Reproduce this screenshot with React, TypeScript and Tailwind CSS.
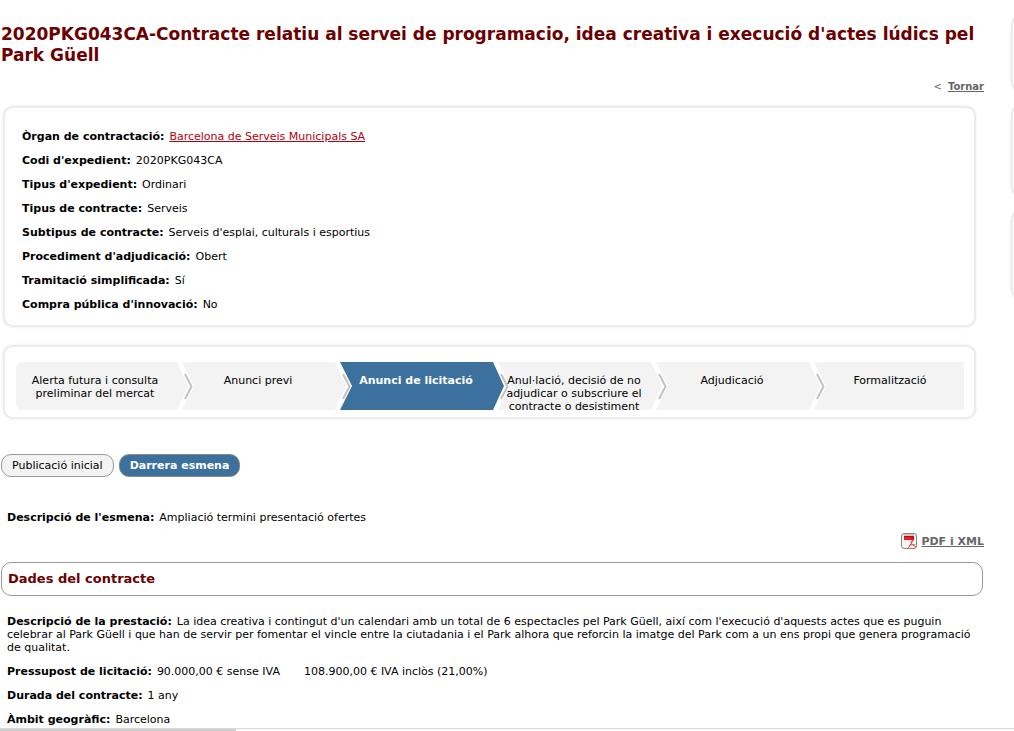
import clsx from 'clsx'
import type { ReactNode } from 'react'

type Step = { label: string; active?: boolean }

const STEPS: Step[] = [
  { label: 'Alerta futura i consulta preliminar del mercat' },
  { label: 'Anunci previ' },
  { label: 'Anunci de licitació', active: true },
  { label: 'Anul·lació, decisió de no adjudicar o subscriure el contracte o desistiment' },
  { label: 'Adjudicació' },
  { label: 'Formalització' },
]

const GREY = '#f3f3f3'
const BLUE = '#3c719d'

function Field({ label, children }: { label: string; children: ReactNode }) {
  return (
    <div>
      <dt className="mr-[5px] inline font-bold">{label}:</dt>
      <dd className="inline">{children}</dd>
    </div>
  )
}

// Arrow drawn over the joint between two steps
function StepArrow({ from, to }: { from: string; to: string }) {
  return (
    <svg className="absolute top-0 left-full z-[1] h-12 w-6" viewBox="0 0 24 48" aria-hidden="true">
      <rect width="24" height="48" fill={to} />
      <path d="M0 0H8L20 24L8 48H0Z" fill="#fff" />
      <path d="M0 0H3L14 24L3 48H0Z" fill={from} />
      <path d="M11 12L17.5 24.500L11 37" fill="none" stroke="#c2c2c2" strokeWidth="2" />
    </svg>
  )
}

function Steps() {
  return (
    <ol className="flex h-12 rounded-l-md bg-[#f3f3f3]">
      {STEPS.map((step, i) => {
        const next = STEPS[i + 1]
        return (
          <li
            key={step.label}
            className={clsx('relative min-w-0 flex-1', step.active && 'bg-[#3c719d]')}
          >
            {next && (
              <StepArrow from={step.active ? BLUE : GREY} to={next.active ? BLUE : GREY} />
            )}
            <a
              href="#fase"
              className={clsx(
                'relative z-10 block pt-3 text-center',
                i === 0 ? 'px-2' : 'pr-1 pl-[14px]',
                step.active && 'font-bold text-white',
              )}
            >
              {step.label}
            </a>
          </li>
        )
      })}
    </ol>
  )
}

function PdfIcon() {
  return (
    <svg className="size-4" viewBox="0 0 16 16" aria-hidden="true">
      <rect x="0.5" y="0.5" width="15" height="15" rx="2.5" fill="#f4f4f4" stroke="#858585" />
      <path d="M3 1H13V3H3Z" fill="#c9c9c9" />
      <path d="M3 3H13V7H3Z" fill="#ee1c1c" />
      <path d="M3 3H13V4H3Z" fill="#b80808" />
      <path d="M10 3H13V7L11 9Z" fill="#c41010" />
      <path
        d="M12 6C11 9 10 12 7 15M10 8C10 11 12 12.5 15 14M8 12.5C10 11.5 12 11 14 12"
        fill="none"
        stroke="#ea4848"
        strokeWidth="1"
      />
    </svg>
  )
}

const CARD = 'rounded-[10px] border-2 border-[#ececec] bg-white shadow-[0_0_3px_#e8e8e8]'

export default function App() {
  return (
    <div className="flex min-h-screen flex-col overflow-hidden bg-white font-['DejaVu_Sans',Verdana,sans-serif] text-[11px] leading-[13px] text-black">
      <div className="flex flex-1">
        <main className="min-w-0 flex-1 pt-6 pr-[26px] pl-[1px]">
          <h1 className="text-[17px] leading-[21px] font-bold text-[#6c0000]">
            2020PKG043CA-Contracte relatiu al servei de programacio, idea creativa i execució d'actes
            lúdics pel Park Güell
          </h1>

          <div className="mt-[14px] flex justify-end gap-[6px] text-[10px] text-[#666]">
            <span>&lt;</span>
            <a href="#tornar" className="font-bold underline">
              Tornar
            </a>
          </div>

          <section className={clsx(CARD, 'mt-[13px] mr-2 ml-[2px] px-[17px] pt-[22px] pb-[14px]')}>
            <dl className="flex flex-col gap-[11px]">
              <Field label="Òrgan de contractació">
                <a href="#organ" className="text-[#b1000e] underline">
                  Barcelona de Serveis Municipals SA
                </a>
              </Field>
              <Field label="Codi d'expedient">2020PKG043CA</Field>
              <Field label="Tipus d'expedient">Ordinari</Field>
              <Field label="Tipus de contracte">Serveis</Field>
              <Field label="Subtipus de contracte">Serveis d'esplai, culturals i esportius</Field>
              <Field label="Procediment d'adjudicació">Obert</Field>
              <Field label="Tramitació simplificada">Sí</Field>
              <Field label="Compra pública d'innovació">No</Field>
            </dl>
          </section>

          <nav
            className={clsx(CARD, 'mt-[18px] mr-2 ml-[2px] pt-[15px] pr-[10px] pb-[7px] pl-[11px]')}
          >
            <Steps />
          </nav>

          <div className="mt-[35px] flex gap-[5px]">
            <button className="h-[23px] rounded-[10px] border border-[#999] bg-[#f3f3f3] px-[10px]">
              Publicació inicial
            </button>
            <button className="h-[23px] rounded-[10px] border border-[#8b8b8b] bg-[#3c719d] px-[10px] font-bold text-white">
              Darrera esmena
            </button>
          </div>

          <dl className="mt-[34px] pl-[6px]">
            <Field label="Descripció de l'esmena">Ampliació termini presentació ofertes</Field>
          </dl>

          <div className="mt-[9px] flex items-center justify-end gap-1">
            <PdfIcon />
            <a href="#pdf" className="font-bold text-[#666] underline">
              PDF i XML
            </a>
          </div>

          <h2 className="mt-[13px] mr-[1px] h-[34px] rounded-[10px] border border-[#999] pl-[6px] text-[13px] leading-[32px] font-bold text-[#6c0000]">
            Dades del contracte
          </h2>

          <dl className="mt-[19px] flex flex-col gap-[11px] pl-[6px]">
            <Field label="Descripció de la prestació">
              La idea creativa i contingut d'un calendari amb un total de 6 espectacles pel Park Güell,
              així com l'execució d'aquests actes que es puguin celebrar al Park Güell i que han de
              servir per fomentar el vincle entre la ciutadania i el Park alhora que reforcin la imatge
              del Park com a un ens propi que genera programació de qualitat.
            </Field>
            <Field label="Pressupost de licitació">
              <span className="mr-6">90.000,00 € sense IVA</span>
              <span>108.900,00 € IVA inclòs (21,00%)</span>
            </Field>
            <Field label="Durada del contracte">1 any</Field>
            <Field label="Àmbit geogràfic">Barcelona</Field>
          </dl>
        </main>

        {/* Side column, runs past the right edge */}
        <aside className="-mr-[204px] flex w-52 shrink-0 flex-col gap-[13px] pt-[15px] pl-[1px]">
          <div className={clsx(CARD, 'h-[77px]')} />
          <div className={clsx(CARD, 'h-[92px]')} />
          <div className={clsx(CARD, 'h-[89px]')} />
        </aside>
      </div>

      <div className="h-[3px] border-t border-[#d9d9d9]">
        <div className="h-[2px] w-[236px] bg-[#cfcfcf]" />
      </div>
    </div>
  )
}
